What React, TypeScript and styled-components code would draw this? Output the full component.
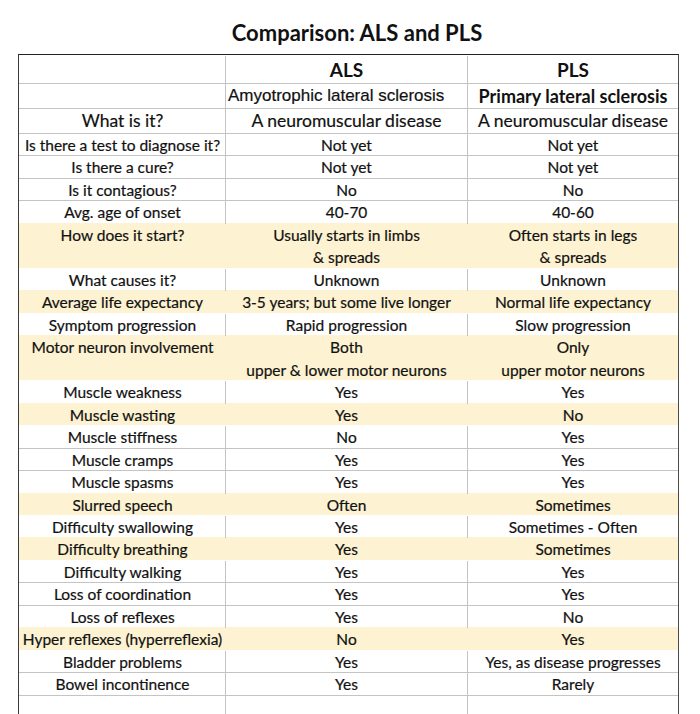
import React from 'react';
import styled, { createGlobalStyle } from 'styled-components';

const GlobalStyle = createGlobalStyle`
  body {
    margin: 0;
    background: #ffffff;
    font-family: Lato, "Open Sans", sans-serif;
    color: #111111;
  }
`;

const ROW_UNIT = 22.48;
const GRID = '#c4c4c4';
const HIGHLIGHT = '#fdf3d2';

const Page = styled.div`
  width: 700px;
  height: 714px;
  overflow: hidden;
`;

const Title = styled.h1`
  margin: 0;
  height: 54px;
  box-sizing: border-box;
  padding: 19px 0 0 14px;
  text-align: center;
  font-size: 22px;
  font-weight: 700;
  line-height: 27px;
`;

const Table = styled.div`
  margin-left: 18px;
  width: 661px;
  box-sizing: border-box;
  border-top: 1px solid #222222;
  border-left: 1px solid #3a3a3a;
  border-right: 1px solid #4a4a4a;
`;

const Row = styled.div<{ $height: number; $highlight?: boolean; $line?: boolean }>`
  display: grid;
  grid-template-columns: 206px 242px 211px;
  height: ${(p) => p.$height}px;
  box-sizing: border-box;
  background: ${(p) => (p.$highlight ? HIGHLIGHT : '#ffffff')};
  border-top: 1px solid ${(p) => (p.$line ? GRID : 'transparent')};
`;

const Cell = styled.div<{ $divider?: boolean; $left?: boolean }>`
  display: flex;
  flex-direction: column;
  justify-content: center;
  align-items: ${(p) => (p.$left ? 'flex-start' : 'center')};
  padding-left: ${(p) => (p.$left ? '2px' : '0')};
  border-left: 1px solid ${(p) => (p.$divider ? GRID : 'transparent')};
  white-space: nowrap;
  overflow: visible;
`;

const Line = styled.span<{ $size?: number; $bold?: boolean; $arial?: boolean }>`
  display: block;
  height: ${ROW_UNIT}px;
  line-height: ${ROW_UNIT}px;
  font-size: ${(p) => p.$size ?? 15.5}px;
  font-weight: ${(p) => (p.$bold ? 700 : 400)};
  font-family: ${(p) => (p.$arial ? '"Liberation Sans", Arial, sans-serif' : 'Lato, "Open Sans", sans-serif')};
  -webkit-text-stroke: ${(p) => (p.$bold ? '0' : '0.2px')} #111111;
`;

const HeaderLine = styled(Line)`
  height: auto;
  line-height: 1;
`;

interface DataRow {
  label: string;
  als: string[];
  pls: string[];
  hl?: boolean;
}

const rows: DataRow[] = [
  { label: 'Is there a test to diagnose it?', als: ['Not yet'], pls: ['Not yet'] },
  { label: 'Is there a cure?', als: ['Not yet'], pls: ['Not yet'] },
  { label: 'Is it contagious?', als: ['No'], pls: ['No'] },
  { label: 'Avg. age of onset', als: ['40-70'], pls: ['40-60'] },
  { label: 'How does it start?', als: ['Usually starts in limbs', '& spreads'], pls: ['Often starts in legs', '& spreads'], hl: true },
  { label: 'What causes it?', als: ['Unknown'], pls: ['Unknown'] },
  { label: 'Average life expectancy', als: ['3-5 years; but some live longer'], pls: ['Normal life expectancy'], hl: true },
  { label: 'Symptom progression', als: ['Rapid progression'], pls: ['Slow progression'] },
  { label: 'Motor neuron involvement', als: ['Both', 'upper & lower motor neurons'], pls: ['Only', 'upper motor neurons'], hl: true },
  { label: 'Muscle weakness', als: ['Yes'], pls: ['Yes'] },
  { label: 'Muscle wasting', als: ['Yes'], pls: ['No'], hl: true },
  { label: 'Muscle stiffness', als: ['No'], pls: ['Yes'] },
  { label: 'Muscle cramps', als: ['Yes'], pls: ['Yes'] },
  { label: 'Muscle spasms', als: ['Yes'], pls: ['Yes'] },
  { label: 'Slurred speech', als: ['Often'], pls: ['Sometimes'], hl: true },
  { label: 'Difficulty swallowing', als: ['Yes'], pls: ['Sometimes - Often'] },
  { label: 'Difficulty breathing', als: ['Yes'], pls: ['Sometimes'], hl: true },
  { label: 'Difficulty walking', als: ['Yes'], pls: ['Yes'] },
  { label: 'Loss of coordination', als: ['Yes'], pls: ['Yes'] },
  { label: 'Loss of reflexes', als: ['Yes'], pls: ['No'] },
  { label: 'Hyper reflexes (hyperreflexia)', als: ['No'], pls: ['Yes'], hl: true },
  { label: 'Bladder problems', als: ['Yes'], pls: ['Yes, as disease progresses'] },
  { label: 'Bowel incontinence', als: ['Yes'], pls: ['Rarely'] },
];

const App: React.FC = () => {
  return (
    <Page>
      <GlobalStyle />
      <Title>Comparison: ALS and PLS</Title>
      <Table>
        <Row $height={28}>
          <Cell />
          <Cell $divider>
            <HeaderLine $size={19} $bold>ALS</HeaderLine>
          </Cell>
          <Cell $divider>
            <HeaderLine $size={19} $bold>PLS</HeaderLine>
          </Cell>
        </Row>
        <Row $height={24.5} $line>
          <Cell />
          <Cell $divider $left>
            <Line $arial $size={17}>Amyotrophic lateral sclerosis</Line>
          </Cell>
          <Cell $divider>
            <Line $size={18} $bold>Primary lateral sclerosis</Line>
          </Cell>
        </Row>
        <Row $height={25.5} $line>
          <Cell>
            <Line $size={17.5}>What is it?</Line>
          </Cell>
          <Cell $divider>
            <Line $size={17.5}>A neuromuscular disease</Line>
          </Cell>
          <Cell $divider>
            <Line $size={17.5}>A neuromuscular disease</Line>
          </Cell>
        </Row>
        {rows.map((r, i) => {
          const prevHl = i > 0 && rows[i - 1].hl;
          const units = Math.max(r.als.length, r.pls.length);
          return (
            <Row key={r.label} $height={units * ROW_UNIT} $highlight={r.hl} $line={!r.hl && !prevHl}>
              <Cell>
                <Line>{r.label}</Line>
                {units > 1 && <Line />}
              </Cell>
              <Cell $divider={!r.hl}>
                {r.als.map((t) => (
                  <Line key={t}>{t}</Line>
                ))}
              </Cell>
              <Cell $divider={!r.hl}>
                {r.pls.map((t) => (
                  <Line key={t}>{t}</Line>
                ))}
              </Cell>
            </Row>
          );
        })}
        <Row $height={40} $line>
          <Cell />
          <Cell $divider />
          <Cell $divider />
        </Row>
      </Table>
    </Page>
  );
};

export default App;
